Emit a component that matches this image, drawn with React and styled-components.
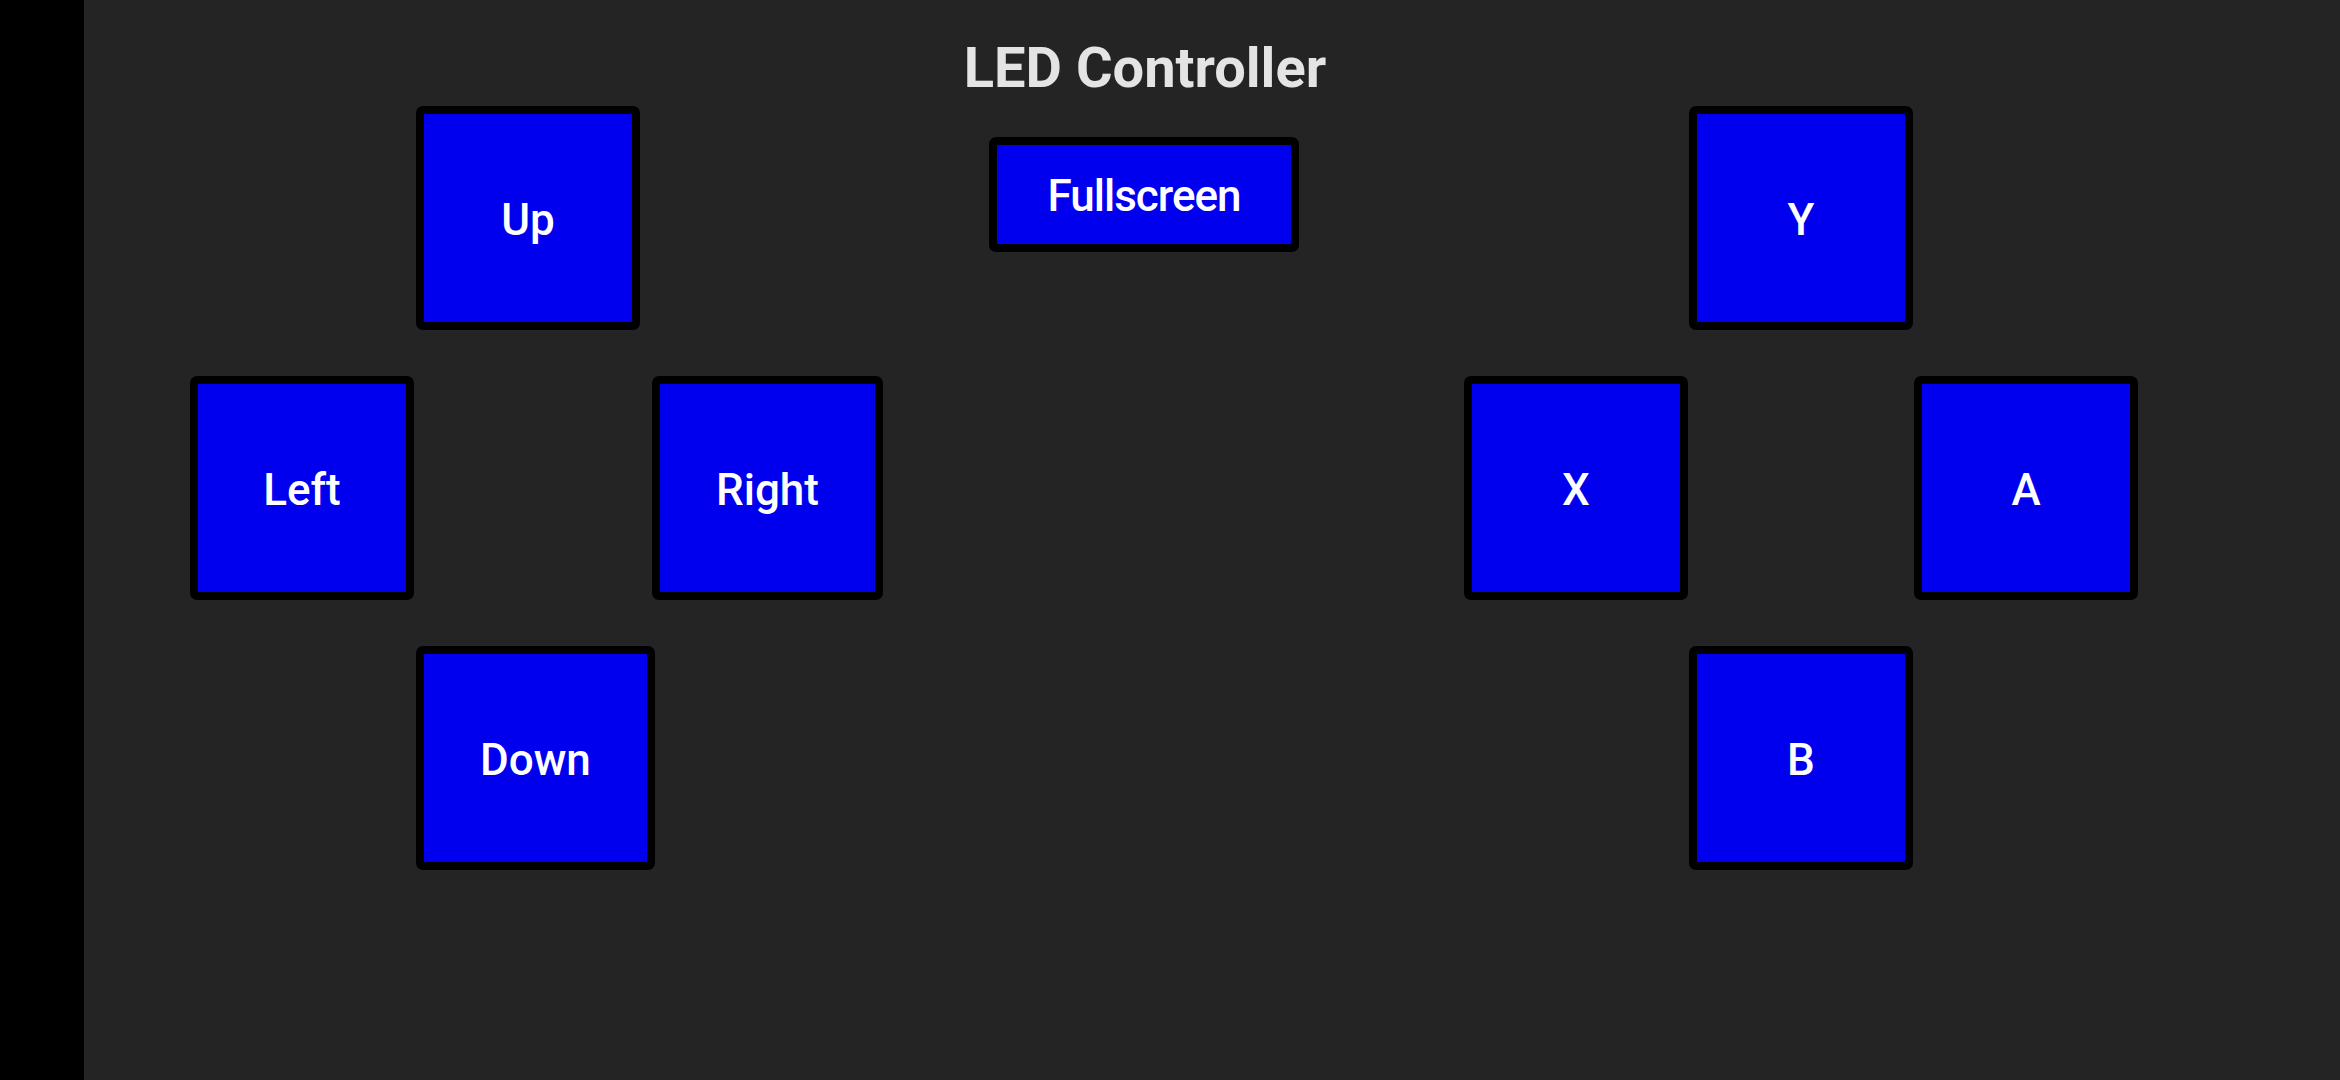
import React from "react";
import styled, { createGlobalStyle } from "styled-components";

const GlobalStyle = createGlobalStyle`
    body {
        margin: 0;
        background-color: #242424;
        font-family: Roboto, "Liberation Sans", sans-serif;
    }
`

const Shell = styled.div`
    display: flex;
    min-height: 100vh;
`
const Notch = styled.div`
    width: 84px;
    flex-shrink: 0;
    background-color: #000;
`
const Main = styled.div`
    flex: 1;
    background-color: #242424;
`
const Content = styled.div`
    width: 2122px;
`
const Title = styled.h1`
    margin: 35px 0 5px;
    text-align: center;
    color: #e4e4e4;
    font-size: 56px;
    font-weight: 700;
    line-height: normal;
`
const Controls = styled.div`
    display: flex;
    align-items: flex-start;
    padding-left: 106px;
`
const Pad = styled.div`
    display: grid;
    grid-template-columns: ${props => props.$cols};
    grid-template-rows: 224px 224px 224px;
    grid-template-areas:
        ". up ."
        "left . right"
        ". down .";
    row-gap: 46px;
    justify-items: start;
`
const Key = styled.button`
    grid-area: ${props => props.$area};
    box-sizing: border-box;
    min-width: 224px;
    height: 224px;
    padding: 3px 56px 0;
    background-color: #0000ee;
    color: #fff;
    border: 8px solid #000;
    border-radius: 7px;
    font-family: Roboto, "Liberation Sans", sans-serif;
    font-size: 44px;
    font-weight: 500;
    white-space: nowrap;
    cursor: pointer;
`
const FullscreenBTN = styled(Key)`
    min-width: 0;
    width: 310px;
    height: 115px;
    padding: 2px 0 0;
    margin: 31px 165px 0 108px;
    letter-spacing: -1px;
`

function App () {
    return (
        <Shell>
            <GlobalStyle />
            <Notch />
            <Main>
                <Content>
                    <Title>LED Controller</Title>
                    <Controls>
                        <Pad $cols="226px 236px 229px">
                            <Key $area="up">Up</Key>
                            <Key $area="left">Left</Key>
                            <Key $area="right">Right</Key>
                            <Key $area="down">Down</Key>
                        </Pad>
                        <FullscreenBTN>Fullscreen</FullscreenBTN>
                        <Pad $cols="225px 225px 224px">
                            <Key $area="up">Y</Key>
                            <Key $area="left">X</Key>
                            <Key $area="right">A</Key>
                            <Key $area="down">B</Key>
                        </Pad>
                    </Controls>
                </Content>
            </Main>
        </Shell>
    )
}

export default App;
